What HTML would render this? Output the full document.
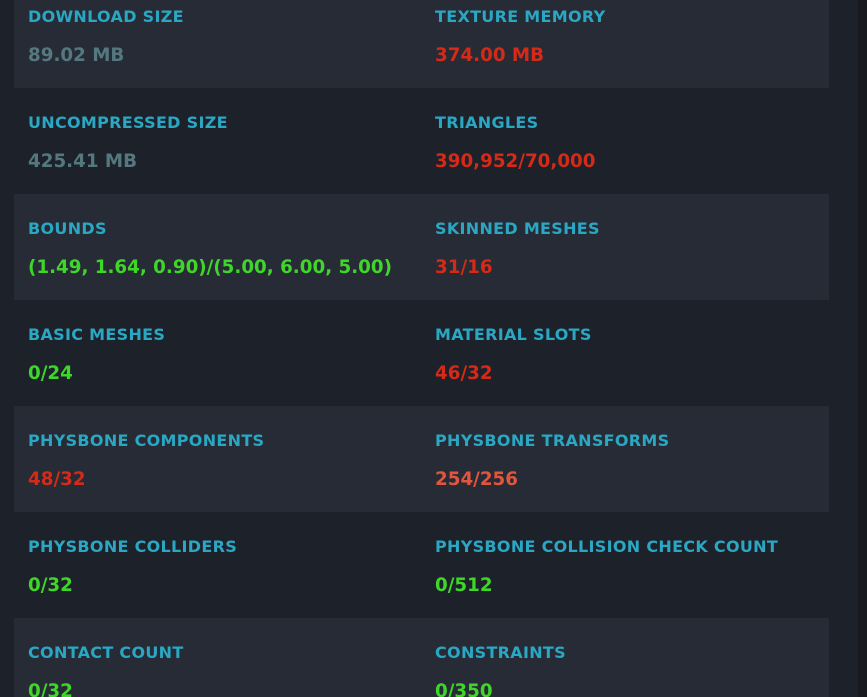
<!DOCTYPE html>
<html><head><style>
html,body{margin:0;padding:0;width:867px;height:697px;overflow:hidden;background:#1d212a;font-family:"DejaVu Sans","Liberation Sans",sans-serif;font-weight:bold}
.frame{position:relative;width:867px;height:697px;overflow:hidden}
.wrap{position:absolute;left:0;top:-18px;width:858px}
.strip{position:absolute;left:858px;top:0;width:9px;height:697px;background:#17191e}
.row{position:relative;height:106px;margin-left:14px;width:815px}
.row.s{background:#272b36}
.cell{position:absolute;top:0;width:400px}
.c1{left:14px}.c2{left:421px}
.l{position:absolute;top:25px;font-size:16px;color:#2aa7c3;letter-spacing:0.3px;white-space:nowrap}
.v{position:absolute;top:63px;font-size:18.3px;white-space:nowrap}
.g{color:#55787f}.r{color:#d52a18}.gr{color:#3fd62a}.o{color:#e2553c}
</style></head><body>
<div class="frame">
<div class="wrap">
<div class="row s"><div class="cell c1"><div class="l">DOWNLOAD SIZE</div><div class="v g">89.02 MB</div></div><div class="cell c2"><div class="l">TEXTURE MEMORY</div><div class="v r">374.00 MB</div></div></div>
<div class="row"><div class="cell c1"><div class="l">UNCOMPRESSED SIZE</div><div class="v g">425.41 MB</div></div><div class="cell c2"><div class="l">TRIANGLES</div><div class="v r">390,952/70,000</div></div></div>
<div class="row s"><div class="cell c1"><div class="l">BOUNDS</div><div class="v gr">(1.49, 1.64, 0.90)/(5.00, 6.00, 5.00)</div></div><div class="cell c2"><div class="l">SKINNED MESHES</div><div class="v r">31/16</div></div></div>
<div class="row"><div class="cell c1"><div class="l">BASIC MESHES</div><div class="v gr">0/24</div></div><div class="cell c2"><div class="l">MATERIAL SLOTS</div><div class="v r">46/32</div></div></div>
<div class="row s"><div class="cell c1"><div class="l">PHYSBONE COMPONENTS</div><div class="v r">48/32</div></div><div class="cell c2"><div class="l">PHYSBONE TRANSFORMS</div><div class="v o">254/256</div></div></div>
<div class="row"><div class="cell c1"><div class="l">PHYSBONE COLLIDERS</div><div class="v gr">0/32</div></div><div class="cell c2"><div class="l">PHYSBONE COLLISION CHECK COUNT</div><div class="v gr">0/512</div></div></div>
<div class="row s"><div class="cell c1"><div class="l">CONTACT COUNT</div><div class="v gr">0/32</div></div><div class="cell c2"><div class="l">CONSTRAINTS</div><div class="v gr">0/350</div></div></div>
</div>
<div class="strip"></div>
</div>
</body></html>
